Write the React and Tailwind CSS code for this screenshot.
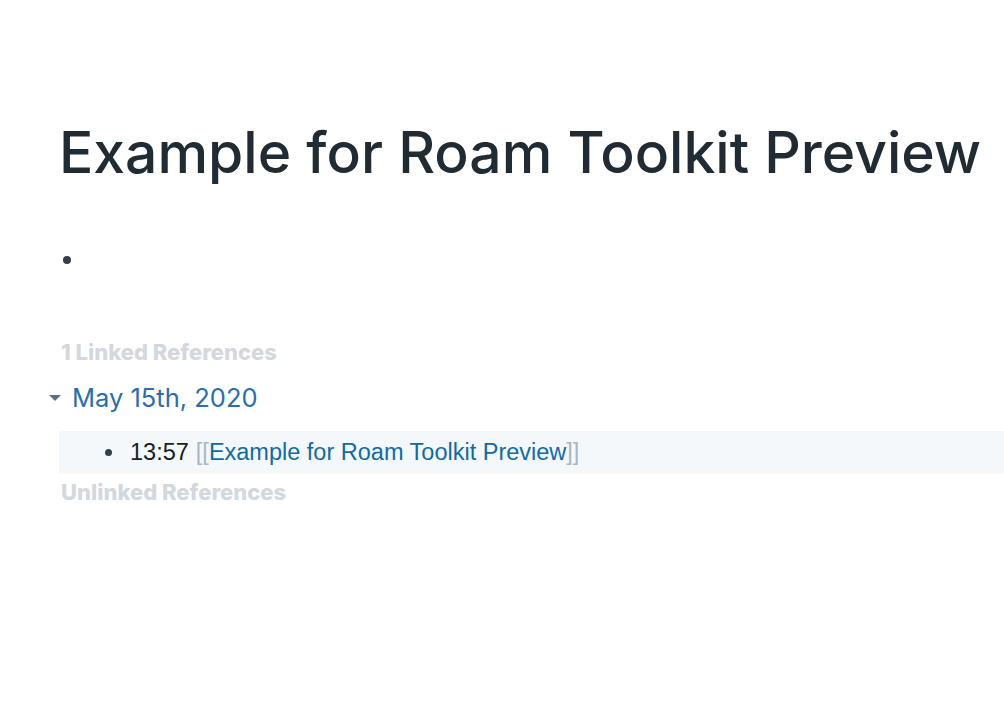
import React from 'react';

const App = () => {
    return (
        <main
            className="w-[1004px] h-[720px] bg-white overflow-hidden text-[#202b33]"
            style={{ fontFamily: 'Inter, "Noto Sans", sans-serif' }}
        >
            <div className="pl-[59px] pt-[117px]">
                <h1 className="text-[57px] leading-[72px] font-medium whitespace-nowrap">
                    Example for Roam Toolkit Preview
                </h1>

                <div className="mt-[57px] h-[28px] flex items-center pl-[4px]">
                    <span className="w-[8px] h-[8px] rounded-full bg-[#30404d]" />
                </div>

                <div className="mt-[64px] pl-[2px] text-[22px] leading-[28px] font-extrabold text-[#d3d8de]">
                    1 Linked References
                </div>

                <div className="mt-[15px] flex items-center -ml-[11px]">
                    <svg width="14" height="14" viewBox="0 0 14 14" className="mr-[10px]">
                        <path d="M1 4 L13 4 L7 10 Z" fill="#5c7080" />
                    </svg>
                    <span className="text-[25.5px] leading-[34px] text-[#2b6ea8]">May 15th, 2020</span>
                </div>

                <div
                    className="mt-[16px] h-[43px] bg-[#f5f8fa] flex items-center pl-[46px] text-[23.5px]"
                    style={{ fontFamily: '"Liberation Sans", Arial, sans-serif' }}
                >
                    <span className="w-[7px] h-[7px] rounded-full bg-[#30404d] mr-[18px]" />
                    <span className="text-[#182026]">13:57</span>
                    <span className="ml-[7px] text-[#a7b6c2]">[[</span>
                    <span className="text-[#106ba3]">Example for Roam Toolkit Preview</span>
                    <span className="text-[#a7b6c2]">]]</span>
                </div>

                <div className="mt-[4px] pl-[2px] text-[22px] leading-[28px] font-extrabold text-[#d3d8de]">
                    Unlinked References
                </div>
            </div>
        </main>
    );
};

export default App;
